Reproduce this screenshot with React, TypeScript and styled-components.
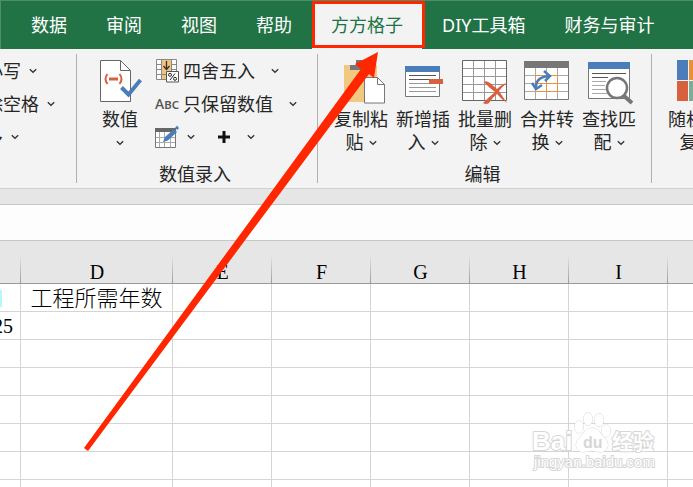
import React from 'react';
import styled, { createGlobalStyle, css } from 'styled-components';

const GlobalStyle = createGlobalStyle`
  *, *::before, *::after { box-sizing: border-box; }
  html, body { margin: 0; padding: 0; overflow: hidden; }
  body { font-family: "Noto Sans", "Noto Sans CJK SC", sans-serif; color: #262626; background: #fff; }
  button, input { font: inherit; color: inherit; }
`;

const Page = styled.div`
  position: relative;
  display: flex;
  flex-direction: column;
  height: 100vh;
  overflow: hidden;
`;

const TabBar = styled.nav`
  display: flex;
  flex: none;
  gap: 1px;
  height: 49px;
  padding-left: 11px;
  background: #217346;
  border-top: 1px solid #4d8f6b;
  border-left: 1px solid #4d8f6b;
`;

const Tab = styled.button<{ $active?: boolean }>`
  position: relative;
  flex: none;
  padding: 0 19px;
  border: 0;
  background: transparent;
  color: #fff;
  font-size: 18px;
  line-height: 26px;
  white-space: nowrap;
  ${(p) =>
    p.$active &&
    css`
      background: #f3f3f3;
      color: #217346;
    `}
`;

const Highlight = styled.span`
  position: absolute;
  inset: 0 -3px 1px 0;
  border: 3px solid #ff2600;
`;

const Ribbon = styled.div`
  display: flex;
  flex: none;
  height: 140px;
  padding: 5px 0;
  background: #f3f3f3;
  border-bottom: 1px solid #d0d0d0;
  overflow: hidden;
`;

const Group = styled.section<{ $width: number }>`
  display: flex;
  flex-direction: column;
  justify-content: space-between;
  flex: none;
  width: ${(p) => p.$width}px;
  border-right: 1px solid #b0b0b0;
`;

const GroupBody = styled.div<{ $pad?: number }>`
  display: flex;
  padding-left: ${(p) => p.$pad ?? 0}px;
`;

const GroupName = styled.div`
  margin-bottom: -3px;
  padding-right: 4px;
  font-size: 18px;
  line-height: 24px;
  text-align: center;
`;

const Stack = styled.div<{ $shift?: number }>`
  display: flex;
  flex-direction: column;
  margin-left: ${(p) => p.$shift ?? 0}px;
`;

const Line = styled.div`
  display: flex;
  align-items: center;
  gap: 22px;
`;

const SmallButton = styled.button<{ $gap?: number }>`
  display: flex;
  align-items: center;
  gap: ${(p) => p.$gap ?? 8}px;
  height: 33px;
  padding: 0;
  border: 0;
  background: transparent;
  font-size: 18px;
  line-height: 26px;
  white-space: nowrap;
`;

const IconLabel = styled.span`
  display: grid;
  grid-template-columns: 24px auto;
  align-items: center;
  column-gap: 4px;
`;

const AbcIcon = styled.span`
  color: #555;
  font-size: 14px;
  font-weight: 500;
  line-height: 20px;
  font-variant: small-caps;
`;

const BigButton = styled.button`
  display: flex;
  flex-direction: column;
  align-items: center;
  flex: none;
  width: 62px;
  padding: 0;
  border: 0;
  background: transparent;
  font-size: 18px;
  line-height: 23px;
  white-space: nowrap;
`;

const BigIcon = styled.span`
  display: flex;
  height: 54px;
  padding-top: 4px;
`;

const LabelLine = styled.span`
  display: flex;
  align-items: center;
  gap: 5px;
  height: 23px;
`;

const Spacer = styled.div`
  flex: none;
  height: 16px;
  background: #e6e6e6;
  border-bottom: 1px solid #c6c6c6;
`;

const FormulaInput = styled.input`
  flex: none;
  width: 100%;
  height: 36px;
  padding: 0 12px;
  border: 0;
  border-bottom: 1px solid #c6c6c6;
  border-radius: 0;
  background: #fdfdfd;
  outline: none;
`;

const Sheet = styled.table`
  flex: none;
  display: table;
  width: 100%;
  table-layout: fixed;
  border-collapse: separate;
  border-spacing: 0;
  color: #000;
  font-family: "Liberation Serif", "Noto Sans CJK SC", serif;
`;

const ColumnHead = styled.th`
  height: 43px;
  padding: 0;
  vertical-align: bottom;
  border-bottom: 1px solid #999;
  background: linear-gradient(#e6e6e6, #9c9c9c) right bottom / 1px 28px no-repeat #e6e6e6;
  font-size: 20px;
  font-weight: 400;
  line-height: 22px;

  &:last-child { background: #e6e6e6; }
`;

const Cell = styled.td`
  height: 28px;
  padding: 2px 0 0;
  border-right: 1px solid #d4d4d4;
  border-bottom: 1px solid #d4d4d4;
  overflow: hidden;
  font-size: 22px;
  font-weight: 300;
  line-height: 25px;
  text-align: center;
  white-space: nowrap;

  &:last-child { border-right: 0; }
`;

const NumberValue = styled.span`
  display: flex;
  justify-content: flex-end;
  padding-right: 7px;
  font-size: 20px;
`;

const LinkCell = styled.span`
  display: block;
  width: 2px;
  height: 17px;
  background: #b5f7fa;
`;

const Arrow = styled.svg`
  position: absolute;
  left: 0;
  top: 0;
  pointer-events: none;
`;

const Watermark = styled.svg`
  position: absolute;
  right: 34px;
  bottom: 12px;
  pointer-events: none;
`;

const Chevron = () => (
  <svg width="8" height="6" viewBox="0 0 8 6" fill="none" stroke="#333" strokeWidth="1.3" aria-hidden="true">
    <path d="M.8 1.2 4 4.3 7.2 1.2" />
  </svg>
);

const ValueIcon = () => (
  <svg width="44" height="46" viewBox="0 0 44 46" fill="none">
    <path d="M2.5 2.5h20l10 10v31h-30z" fill="#fff" stroke="#666" />
    <path d="M22.5 2.5v10h10" stroke="#666" />
    <path d="M9.500 16q-4 5 0 10M21.500 16q4 5 0 10" stroke="#d9603f" strokeWidth="2" />
    <path d="M11 21h9" stroke="#d9603f" strokeWidth="3" />
    <path d="m23.500 29.500 7 7L42.500 22" stroke="#4a7ebb" strokeWidth="4" />
  </svg>
);

const RoundIcon = () => (
  <svg width="24" height="24" viewBox="0 0 24 24" fill="none">
    <path d="M1.500.5h20v20h-20z" fill="#fff" />
    <path d="M7 1h9v19H7z" fill="#f0c47c" />
    <path d="M1.500.5h20v20h-20zM6.500.5v20M16.500.5v20M1.500 5.500h5M16.500 5.500h5M1.500 10.500h5M16.500 10.500h5M1.500 15.500h15" stroke="#888" />
    <path d="M11.500 2v8M8.500 7l3 3.500 3-3.500" stroke="#333" strokeWidth="1.300" />
    <path d="M11.500 12.500h12v10.500h-12z" fill="#fff" stroke="#555" />
    <circle cx="15" cy="15.800" r="1.500" stroke="#222" />
    <circle cx="20" cy="19.800" r="1.500" stroke="#222" />
    <path d="m20 14.500-5 6.500" stroke="#222" />
  </svg>
);

const EditTableIcon = () => (
  <svg width="24" height="24" viewBox="0 0 24 24" fill="none">
    <path d="M.5 3.500h20v19H.5z" fill="#fff" stroke="#777" />
    <path d="M0 3h21v4H0z" fill="#666" />
    <path d="M4.500 7v15M9.500 7v15M15.500 7v15M1 12.500h19M1 17.500h19" stroke="#aaa" />
    <path d="m10 12 9-8 3 3-9 8.500-5 1.500z" fill="#4a7ebb" />
    <path d="m20 3 2-2.500 2 2.500-1.500 2z" fill="#4a7ebb" />
  </svg>
);

const PlusIcon = () => (
  <svg width="14" height="14" viewBox="0 0 14 14" stroke="#111" strokeWidth="3">
    <path d="M7 1v12M1 7h12" />
  </svg>
);

const PasteIcon = () => (
  <svg width="50" height="46" viewBox="-6 0 50 46" fill="none">
    <path d="M2 7h33v37H2z" fill="#f0c880" />
    <path d="M8 7h6V2h9v5h6v5H8z" fill="#777" />
    <path d="M22.500 19.500h13l7 7v18.500h-20z" fill="#fff" stroke="#777" />
    <path d="M35.500 19.500v7h7" stroke="#777" />
  </svg>
);

const InsertIcon = () => (
  <svg width="40" height="46" viewBox="0 0 40 46" fill="none">
    <path d="M2.500 8.500h34v30h-34z" fill="#fff" stroke="#777" />
    <path d="M2 8h35v6H2z" fill="#4a7ebb" />
    <path d="M6 17.500h27M6 21.500h27" stroke="#555" />
    <path d="M6 25.500h20M6 29.500h27M6 33.500h27" stroke="#999" />
    <path d="M26 21h14v5H26z" fill="#d9603f" />
  </svg>
);

const DeleteIcon = () => (
  <svg width="48" height="48" viewBox="0 0 48 48" fill="none">
    <path d="M1.500 2.500h44v40h-44z" fill="#fff" stroke="#666" />
    <path d="M12.500 3v39M23.500 3v39M34.500 3v39M2 10.500h43M2 18.500h43M2 26.500h43M2 34.500h43" stroke="#999" />
    <path d="M23 24q2-2 6 1l7 6q5-5 10-6-5 4-8 8l8 12q-5-3-10-9-4 3-8 9-3 2-6 0 5-5 12-11-7-5-11-10z" fill="#d9603f" />
  </svg>
);

const MergeIcon = () => (
  <svg width="46" height="46" viewBox="0 0 46 46" fill="none">
    <path d="M.5 3.500h44v38H.5z" fill="#fff" stroke="#777" />
    <path d="M11.500 9v32M22.500 9v32M33.500 9v32M1 17.500h43M1 25.500h43M1 33.500h43" stroke="#aaa" />
    <path d="M0 3h45v7H0z" fill="#777" />
    <path d="M11.500 17.500h22v16h-22zM22.500 17.500v16M11.500 25.500h22" stroke="#e8913c" />
    <path d="M12 29q0-10 13-11" stroke="#4a7ebb" strokeWidth="2.500" />
    <path d="m8 25 4 6 6-4M20 13l6 5-5 5" stroke="#4a7ebb" strokeWidth="2.500" />
  </svg>
);

const FindIcon = () => (
  <svg width="50" height="48" viewBox="-4 0 50 48" fill="none">
    <path d="M.5 4.500h41v36H.5z" fill="#fff" stroke="#777" />
    <path d="M0 4h42v7H0z" fill="#4a7ebb" />
    <path d="M4 15.500h34M4 19.500h16" stroke="#555" />
    <path d="M4 23.500h14M4 27.500h13M4 31.500h14M4 35.500h17" stroke="#aaa" />
    <path d="m35 37 9 8" stroke="#777" strokeWidth="4" />
    <circle cx="29" cy="30" r="10" fill="#fff" stroke="#777" strokeWidth="2.500" />
  </svg>
);

const RandomIcon = () => (
  <svg width="36" height="46" viewBox="0 0 36 46">
    <path d="M0 2h11v20H0z" fill="#4a7ebb" />
    <path d="M12 2h14v20H12z" fill="#e8913c" />
    <path d="M0 23h11v20H0z" fill="#d9603f" />
    <path d="M12 23h14v20H12z" fill="#7aae98" />
  </svg>
);

const tabs = ['数据', '审阅', '视图', '帮助', '方方格子', 'DIY工具箱', '财务与审计'];
const textTools = ['大小写', '删除空格', '更多'];
const editTools = [
  { top: '复制粘', bottom: '贴', icon: <PasteIcon /> },
  { top: '新增插', bottom: '入', icon: <InsertIcon /> },
  { top: '批量删', bottom: '除', icon: <DeleteIcon /> },
  { top: '合并转', bottom: '换', icon: <MergeIcon /> },
  { top: '查找匹', bottom: '配', icon: <FindIcon /> },
];
const columns = ['', 'D', 'E', 'F', 'G', 'H', 'I', ''];
const widths = [21, 152, 99, 99, 99, 99, 99];
const rows = Array.from({ length: 8 }, (_, i) => i);

function cellContent(row: number, col: number) {
  if (row === 0 && col === 0) return <LinkCell />;
  if (row === 0 && col === 1) return '工程所需年数';
  if (row === 1 && col === 0) return <NumberValue>25</NumberValue>;
  return null;
}

export default function App() {
  return (
    <Page>
      <GlobalStyle />
      <TabBar>
        {tabs.map((name) => (
          <Tab key={name} $active={name === '方方格子'}>
            {name}
            {name === '方方格子' && <Highlight />}
          </Tab>
        ))}
      </TabBar>

      <Ribbon>
        <Group $width={77}>
          <Stack $shift={-33}>
            {textTools.map((name) => (
              <SmallButton key={name}>
                {name}
                <Chevron />
              </SmallButton>
            ))}
          </Stack>
        </Group>

        <Group $width={241}>
          <GroupBody $pad={12}>
            <BigButton>
              <BigIcon><ValueIcon /></BigIcon>
              <LabelLine>数值</LabelLine>
              <LabelLine><Chevron /></LabelLine>
            </BigButton>
            <Stack $shift={4}>
              <SmallButton $gap={16}>
                <IconLabel><RoundIcon />四舍五入</IconLabel>
                <Chevron />
              </SmallButton>
              <SmallButton $gap={16}>
                <IconLabel><AbcIcon>Abc</AbcIcon>只保留数值</IconLabel>
                <Chevron />
              </SmallButton>
              <Line>
                <SmallButton aria-label="录入"><EditTableIcon /><Chevron /></SmallButton>
                <SmallButton $gap={16} aria-label="添加"><PlusIcon /><Chevron /></SmallButton>
              </Line>
            </Stack>
          </GroupBody>
          <GroupName>数值录入</GroupName>
        </Group>

        <Group $width={334}>
          <GroupBody $pad={12}>
            {editTools.map((tool) => (
              <BigButton key={tool.top}>
                <BigIcon>{tool.icon}</BigIcon>
                <LabelLine>{tool.top}</LabelLine>
                <LabelLine>{tool.bottom}<Chevron /></LabelLine>
              </BigButton>
            ))}
          </GroupBody>
          <GroupName>编辑</GroupName>
        </Group>

        <Group $width={120}>
          <GroupBody $pad={12}>
            <BigButton>
              <BigIcon><RandomIcon /></BigIcon>
              <LabelLine>随机重</LabelLine>
              <LabelLine>复<Chevron /></LabelLine>
            </BigButton>
          </GroupBody>
        </Group>
      </Ribbon>

      <Spacer />
      <FormulaInput aria-label="编辑栏" />

      <Sheet>
        <colgroup>
          {widths.map((w, i) => (
            <col key={i} width={w} />
          ))}
          <col />
        </colgroup>
        <thead>
          <tr>
            {columns.map((c, i) => (
              <ColumnHead key={i}>{c}</ColumnHead>
            ))}
          </tr>
        </thead>
        <tbody>
          {rows.map((r) => (
            <tr key={r}>
              {columns.map((_, c) => (
                <Cell key={c}>{cellContent(r, c)}</Cell>
              ))}
            </tr>
          ))}
        </tbody>
      </Sheet>

      <Watermark width="128" height="66" viewBox="0 0 128 66" fill="#fff" stroke="#d6d6d6" strokeWidth="1" paintOrder="stroke" strokeLinejoin="round">
        <ellipse cx="48" cy="18" rx="4.500" ry="6" />
        <ellipse cx="57" cy="10" rx="4.500" ry="6.500" />
        <ellipse cx="68" cy="11" rx="4.500" ry="6.500" />
        <ellipse cx="75" cy="22" rx="4.500" ry="6" />
        <path d="M61 19c6 0 8 5 12 9 6 5 5 15-3 15-4 0-6-1-9-1s-6 1-9 1c-8 0-9-10-3-15 4-4 6-9 12-9z" />
        <g fontFamily="Liberation Sans" fontWeight="700" strokeWidth="2">
          <text x="1" y="41" fontSize="26">Bai</text>
          <text x="52" y="39" fontSize="16" fill="#d6d6d6" strokeWidth="0">du</text>
          <text x="81" y="40" fontSize="21" fontFamily="Noto Sans CJK SC">经验</text>
          <text x="3" y="58" fontSize="15" fontWeight="400">jingyan.baidu.com</text>
        </g>
      </Watermark>

      <Arrow width="400" height="460" viewBox="0 0 400 460" fill="#ff2600" aria-hidden="true">
        <path d="M378 52 374 78 369 74 88 451 84 448 361 69 355 64z" />
      </Arrow>
    </Page>
  );
}
